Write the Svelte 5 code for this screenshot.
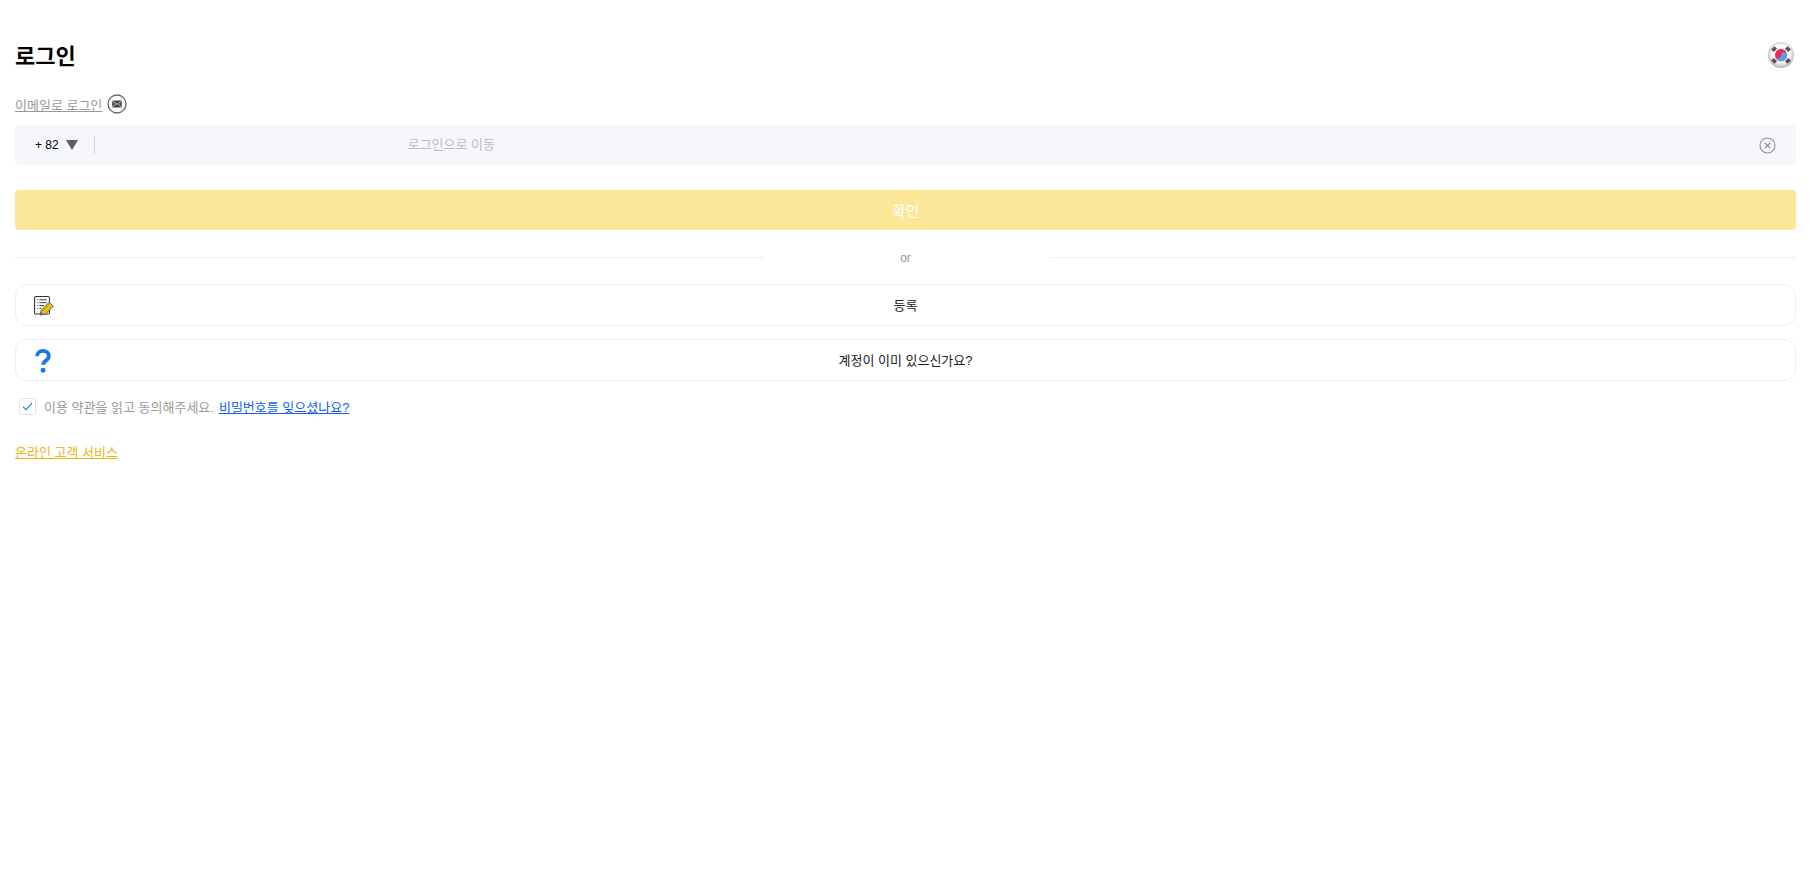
<script>
  let phone = $state('');
  let agreed = $state(true);
</script>

<div class="page">
  <header class="head">
    <h1>로그인</h1>
    <button class="flag" aria-label="언어">
      <svg width="26" height="26" viewBox="0 0 26 26">
        <defs>
          <radialGradient id="ball" cx="50%" cy="45%" r="55%">
            <stop offset="62%" stop-color="#fafafa" />
            <stop offset="100%" stop-color="#b4b4b4" />
          </radialGradient>
        </defs>
        <circle cx="13" cy="13" r="13" fill="url(#ball)" />
        <circle cx="13" cy="13" r="6" fill="#f5234f" />
        <path d="M7 13.6a3 3 0 0 0 6 -.6a3 3 0 0 1 6 .6a6 6 0 0 1 -12 0z" fill="#5b9be0" />
        <g fill="#555">
          <rect x="3.8" y="5.2" width="4.6" height="3.8" transform="rotate(-45 6.1 7.1)" />
          <rect x="17.6" y="5.2" width="4.6" height="3.8" transform="rotate(45 19.9 7.1)" />
          <rect x="3.8" y="17" width="4.6" height="3.8" transform="rotate(45 6.1 18.9)" />
          <rect x="17.6" y="17" width="4.6" height="3.8" transform="rotate(-45 19.9 18.9)" />
        </g>
      </svg>
    </button>
  </header>

  <div class="switch">
    <a href="#email">이메일로 로그인</a>
    <svg width="20" height="20" viewBox="0 0 20 20">
      <circle cx="10" cy="10" r="9" fill="#fff" stroke="#666" stroke-width="1.3" />
      <rect x="5.2" y="6.4" width="9.6" height="7.2" rx="1.2" fill="#444" />
      <path d="M5.6 7.2 10 10.4l4.4-3.2M5.6 13l3-3M14.4 13l-3-3" fill="none" stroke="#fff" stroke-width=".7" />
    </svg>
  </div>

  <div class="field">
    <span class="code">+ 82</span>
    <svg class="caret" width="12" height="10" viewBox="0 0 12 10"><path d="M0 0h12L6 10z" fill="#5c5c5c" /></svg>
    <span class="sep"></span>
    <input bind:value={phone} placeholder="로그인으로 이동" />
    <svg class="clear" width="17" height="17" viewBox="0 0 17 17">
      <circle cx="8.5" cy="8.5" r="7.5" fill="none" stroke="#8a8f99" stroke-width="1.1" />
      <path d="M5.8 5.8l5.4 5.4M11.2 5.8l-5.4 5.4" stroke="#7c818a" stroke-width="1.1" />
    </svg>
  </div>

  <button class="confirm">확인</button>

  <div class="or"><span></span><em>or</em><span></span></div>

  <button class="line">
    <svg class="ico" width="20" height="20" viewBox="0 0 21 21">
      <rect x=".6" y=".6" width="15.6" height="18.4" rx="1.5" fill="#fff" stroke="#333" stroke-width="1.1" />
      <path d="M3 4h1M5.5 4h8M3 7h1M5.5 7h8M3 10h1M5.5 10h5M3 13h1M5.5 13h2" stroke="#333" stroke-width="1" />
      <path d="M6.5 20l1-5L16 6.5l4.3 4.3L12 19z" fill="#f3bd12" stroke="#555" stroke-width="1" />
      <path d="M9 16l7-7" stroke="#a87f00" stroke-width=".8" />
      <path d="M6.5 20l.8-3.5 2.7 2.7z" fill="#666" />
    </svg>
    <span>등록</span>
  </button>

  <button class="line second">
    <svg class="ico q" width="16" height="26" viewBox="0 0 17 26">
      <path d="M2.2 8C2.2 4.4 4.8 2.2 8.4 2.2c3.6 0 6.3 2.2 6.3 5.4 0 2.5-1.4 3.6-3 4.8-1.8 1.3-3 2.4-3 4.6" fill="none" stroke="#1678e6" stroke-width="4" />
      <circle cx="8.6" cy="22.8" r="2.6" fill="#1678e6" />
    </svg>
    <span>계정이 이미 있으신가요?</span>
  </button>

  <div class="terms">
    <label class="check">
      <input type="checkbox" bind:checked={agreed} />
      <svg width="11" height="9" viewBox="0 0 11 9"><path d="M1 4.8 4 7.6 10 1.2" fill="none" stroke="#1678e6" stroke-width="1.1" /></svg>
    </label>
    <span class="read">이용 약관을 읽고 동의해주세요.</span>
    <a href="#forgot">비밀번호를 잊으셨나요?</a>
  </div>

  <a class="support" href="#support">온라인 고객 서비스</a>
</div>

<style>
  :global(body) {
    margin: 0;
    background: #fff;
    font-family: "Liberation Sans", "Noto Sans CJK KR", sans-serif;
    font-size: 13px;
  }
  .page {
    padding: 42px 22px 0 15px;
  }
  .head {
    display: flex;
    justify-content: space-between;
    align-items: center;
    height: 28px;
  }
  h1 {
    margin: 2px 0 0;
    font-size: 22px;
    line-height: 28px;
    font-weight: 700;
    color: #000;
  }
  .flag {
    padding: 0;
    border: 0;
    background: none;
    height: 26px;
    margin: 0 2px 2px 0;
  }
  .switch {
    display: flex;
    align-items: center;
    gap: 5px;
    margin-top: 24px;
    height: 20px;
  }
  .switch a {
    color: #999;
  }
  .field {
    display: flex;
    align-items: center;
    height: 40px;
    margin-top: 11px;
    padding: 0 20px;
    background: #f6f7fb;
    border-radius: 4px;
  }
  .code {
    color: #000;
    font-size: 12px;
  }
  .caret {
    margin-left: 7px;
  }
  .sep {
    width: 1px;
    height: 18px;
    margin-left: 16px;
    background: #d3d3d3;
  }
  .field input {
    flex: 1;
    min-width: 0;
    border: 0;
    outline: 0;
    background: none;
    font: inherit;
    padding: 0 0 2px 0;
    text-indent: 313px;
  }
  .field input::placeholder {
    color: #bbb;
  }
  .confirm {
    display: block;
    width: 100%;
    height: 40px;
    margin-top: 25px;
    border: 0;
    border-radius: 4px;
    background: #fce798;
    color: #fff;
    font: inherit;
    font-size: 15px;
  }
  .or {
    display: flex;
    align-items: center;
    height: 20px;
    margin-top: 17px;
  }
  .or span {
    flex: 1;
    height: 1px;
    background: #eee;
  }
  .or em {
    width: 286px;
    padding-top: 2px;
    text-align: center;
    font-style: normal;
    font-size: 12px;
    color: #999;
  }
  .line {
    position: relative;
    display: block;
    width: 100%;
    height: 42px;
    margin-top: 17px;
    padding: 0 0 2px;
    border: 1px solid #eee;
    border-radius: 12px;
    background: #fff;
    color: #222;
    font: inherit;
    font-size: 13px;
  }
  .second {
    margin-top: 13px;
  }
  .ico {
    position: absolute;
    left: 18px;
    top: 11px;
  }
  .ico.q {
    left: 19px;
    top: 8px;
  }
  .terms {
    display: flex;
    align-items: center;
    height: 20px;
    margin-top: 15px;
    padding-left: 4px;
    color: #999;
  }
  .check {
    position: relative;
    display: flex;
    align-items: center;
    justify-content: center;
    width: 15px;
    height: 15px;
    border: 1px solid #e3e3e3;
    border-radius: 2px;
    margin-right: 8px;
  }
  .check input {
    position: absolute;
    inset: 0;
    margin: 0;
    opacity: 0;
  }
  .read {
    margin-right: 5px;
  }
  .terms a {
    color: #0b63f6;
  }
  .support {
    display: inline-block;
    margin-top: 26px;
    color: #efb40f;
  }
</style>
